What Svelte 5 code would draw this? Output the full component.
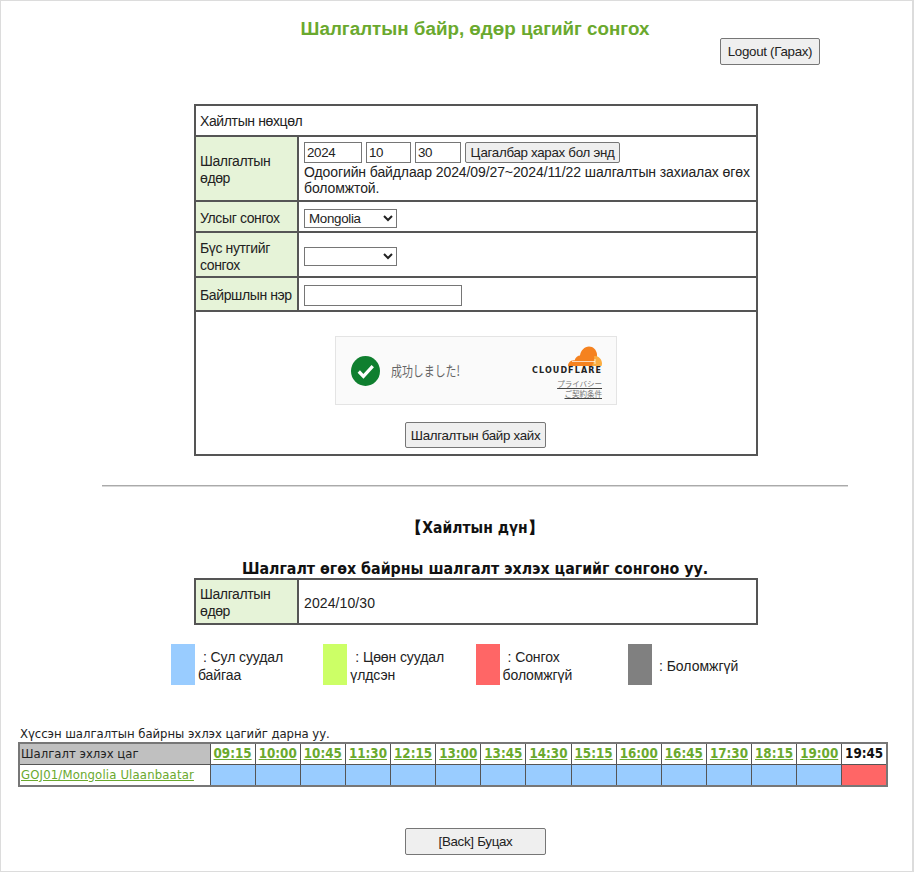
<script>
  const times = ['09:15','10:00','10:45','11:30','12:15','13:00','13:45','14:30','15:15','16:00','16:45','17:30','18:15','19:00'];
  const legend = [
    { color: '#99ccff', a: ': Сул суудал', b: 'байгаа' },
    { color: '#ccff66', a: ': Цөөн суудал', b: 'үлдсэн' },
    { color: '#ff6666', a: ': Сонгох', b: 'боломжгүй' },
    { color: '#808080', a: ': Боломжгүй', b: '' }
  ];
</script>

<div class="page">
  <div class="upper">
    <h1>Шалгалтын байр, өдөр цагийг сонгох</h1>
    <div class="logout-row"><button class="btn logout">Logout (Гарах)</button></div>

    <table class="form search">
      <colgroup><col class="c1" /><col /></colgroup>
      <tbody>
        <tr class="r1"><td colspan="2">Хайлтын нөхцөл</td></tr>
        <tr class="r2">
          <th>Шалгалтын өдөр</th>
          <td>
            <div class="date-line">
              <input class="i-y" value="2024" />
              <input class="i-m" value="10" />
              <input class="i-d" value="30" />
              <button class="btn cal">Цагалбар харах бол энд</button>
            </div>
            <div class="note">Одоогийн байдлаар 2024/09/27~2024/11/22 шалгалтын захиалах өгөх боломжтой.</div>
          </td>
        </tr>
        <tr class="r3">
          <th>Улсыг сонгох</th>
          <td><select class="sel"><option>Mongolia</option></select></td>
        </tr>
        <tr class="r4">
          <th>Бүс нутгийг сонгох</th>
          <td><select class="sel"><option></option></select></td>
        </tr>
        <tr class="r5">
          <th>Байршлын нэр</th>
          <td><input class="i-name" /></td>
        </tr>
        <tr class="r6">
          <td colspan="2" class="center">
            <div class="turnstile">
              <svg class="ok" viewBox="0 0 28 28" width="29" height="30" preserveAspectRatio="none">
                <circle cx="14" cy="14" r="14" fill="#0f7f2f" />
                <path d="M7.5 14.500l4.500 4.500 9-9.500" fill="none" stroke="#fff" stroke-width="3.200" />
              </svg>
              <span class="ok-text">成功しました!</span>
              <div class="cf">
                <svg class="cloud" viewBox="0 0 34 20" width="34" height="20">
                  <path d="M0 20c0-3 2-5.500 5-5.500.5-.2 1-.2 1.500 0C7.500 11 10 9.500 12 9.500c.6-5 4.500-9 9-9 4.300 0 7.500 3.500 8 7.500.5 4-1 8-3.500 12z" fill="#f58220" />
                  <path d="M24 20c1.500-3.500 2.500-6 2.200-10 4-.5 7.800 3 7.800 7.500 0 1-.2 1.800-.5 2.500z" fill="#fbad41" />
                  <path d="M4 15.500h23M27 13v5" stroke="#fff" stroke-width=".7" fill="none" />
                </svg>
                <span class="cf-name">CLOUDFLARE</span>
                <span class="cf-link">プライバシー</span>
                <span class="cf-link">ご契約条件</span>
              </div>
            </div>
            <button class="btn find">Шалгалтын байр хайх</button>
          </td>
        </tr>
      </tbody>
    </table>

    <hr />

    <h2>【Хайлтын дүн】</h2>
    <h3>Шалгалт өгөх байрны шалгалт эхлэх цагийг сонгоно уу.</h3>

    <table class="form selected">
      <colgroup><col class="c1" /><col /></colgroup>
      <tbody>
        <tr>
          <th>Шалгалтын өдөр</th>
          <td>2024/10/30</td>
        </tr>
      </tbody>
    </table>
  </div>

  <div class="legend">
    {#each legend as item}
      <div class="leg">
        <span class="swatch" style:background={item.color}></span>
        <span class="leg-text" class:one={!item.b}>
          <span class="leg-a">{item.a}</span>
          {#if item.b}<span>{item.b}</span>{/if}
        </span>
      </div>
    {/each}
  </div>

  <p class="hint">Хүссэн шалгалтын байрны эхлэх цагийг дарна уу.</p>

  <table class="slots">
    <colgroup><col class="slot-name" /></colgroup>
    <tbody>
      <tr class="head">
        <th class="name">Шалгалт эхлэх цаг</th>
        {#each times as t}
          <td class="t"><a href="#{t}">{t}</a></td>
        {/each}
        <td class="t last">19:45</td>
      </tr>
      <tr class="body">
        <td class="name"><a href="#loc">GOJ01/Mongolia Ulaanbaatar</a></td>
        {#each times as t}
          <td class="free"></td>
        {/each}
        <td class="full"></td>
      </tr>
    </tbody>
  </table>

  <div class="back"><button class="btn back-btn">[Back] Буцах</button></div>
</div>

<style>
  :global(body) { margin: 0; background: #fff; }
  .page {
    box-sizing: border-box;
    width: 914px;
    height: 872px;
    border: 1px solid #dcdcdc;
    border-width: 1px 2px 1px 1px;
    padding: 0 0 0 17px;
    font-family: "Liberation Sans", Arial, sans-serif;
    font-size: 14px;
    color: #222;
    overflow: hidden;
  }
  .upper {
    width: 746px;
    margin-left: 84px;
  }
  h1 {
    margin: 0;
    padding-top: 17px;
    height: 21px;
    line-height: 21px;
    font-size: 18.8px;
    font-weight: bold;
    color: #6aa92e;
    text-align: center;
  }
  .logout-row {
    display: flex;
    justify-content: flex-end;
    width: 718px;
    margin-top: -1px;
    height: 66px;
    align-items: flex-start;
  }
  .btn {
    box-sizing: border-box;
    font-family: "Liberation Sans", Arial, sans-serif;
    font-size: 13.33px;
    letter-spacing: -.3px;
    color: #222;
    background: #efefef;
    border: 1px solid #767676;
    border-radius: 2px;
    padding: 0;
  }
  .logout { width: 100px; height: 27px; }
  .form {
    border-collapse: separate;
    border-spacing: 0;
    border: 1px solid #555;
    width: 564px;
    margin-left: 92px;
    table-layout: fixed;
    letter-spacing: -.38px;
  }
  .c1 { width: 103px; }
  .form th, .form td {
    box-sizing: border-box;
    border: 1px solid #555;
    padding: 0 4px;
    font-weight: normal;
    text-align: left;
    line-height: 17px;
  }
  .form tr > td:nth-child(2) { padding-left: 5px; }
  .form th { background: #e6f3d8; }
  .search .r1 td { height: 31px; padding-top: 2px; }
  .search .r2 td, .search .r2 th { height: 65px; }
  .search .r2 th { padding-top: 2px; }
  .search .r3 td, .search .r3 th { height: 31px; padding-top: 4px; }
  .search .r4 td, .search .r4 th { height: 45px; padding-top: 4px; }
  .search .r5 td, .search .r5 th { height: 34px; padding-top: 2px; }
  .search .r6 td { height: 144px; }
  .date-line { display: flex; gap: 4px; align-items: center; height: 22px; }
  input {
    box-sizing: border-box;
    font-family: "Liberation Sans", Arial, sans-serif;
    font-size: 13.33px;
    letter-spacing: -.3px;
    color: #222;
    background: #fff;
    border: 1px solid #767676;
    padding: 1px 2px;
    height: 21px;
    border-radius: 0;
  }
  .i-y { width: 58px; }
  .i-m { width: 45px; }
  .i-d { width: 46px; }
  .cal { width: 155px; height: 21px; }
  .note { line-height: 16px; letter-spacing: -.1px; }
  .sel {
    box-sizing: border-box;
    width: 93px;
    height: 19px;
    font-family: "Liberation Sans", Arial, sans-serif;
    font-size: 13.33px;
    letter-spacing: -.3px;
    background: #fff;
    border: 1px solid #767676;
    border-radius: 0;
    color: #222;
  }
  .i-name { width: 158px; height: 21px; }
  .form td.center { text-align: center; vertical-align: top; padding: 24px 0 0; }
  .turnstile {
    box-sizing: border-box;
    width: 282px;
    height: 69px;
    margin: 0 auto 17px;
    background: #fafafa;
    border: 1px solid #e4e4e4;
    display: flex;
    align-items: center;
    padding-left: 15px;
    letter-spacing: 0;
  }
  .ok { flex: none; }
  .ok-text {
    display: inline-block;
    width: 68px;
    margin-left: 11px;
    white-space: nowrap;
    font-family: "Noto Sans CJK JP", sans-serif;
    font-size: 14px;
    color: #666;
    transform: scaleX(.78);
    transform-origin: left center;
  }
  .cf {
    margin-left: auto;
    margin-right: 14px;
    padding-top: 4px;
    display: flex;
    flex-direction: column;
    align-items: flex-end;
    line-height: 1;
  }
  .cloud { margin-bottom: 1px; }
  .cf-name {
    font-family: "DejaVu Sans", sans-serif;
    font-size: 8px;
    font-weight: bold;
    letter-spacing: 1.1px;
    color: #222;
    margin-bottom: 4px;
  }
  .cf-link {
    font-family: "Noto Sans CJK JP", sans-serif;
    font-size: 7.5px;
    line-height: 10px;
    color: #777;
    text-decoration: underline;
    text-decoration-color: #444;
  }
  .find { width: 141px; height: 26px; margin-right: 1px; }
  hr {
    margin: 29px 0 0;
    border: 0;
    border-top: 1px solid #aaa;
    border-bottom: 1px solid #d8d8d8;
    height: 0;
  }
  h2 {
    margin: 33px 0 0;
    font-family: "DejaVu Sans Condensed", "DejaVu Sans", sans-serif;
    font-size: 15.5px;
    line-height: 17px;
    font-weight: bold;
    color: #111;
    text-align: center;
  }
  h3 {
    margin: 23px 0 0;
    font-family: "DejaVu Sans Condensed", "DejaVu Sans", sans-serif;
    font-size: 15.8px;
    line-height: 18px;
    font-weight: bold;
    color: #111;
    text-align: center;
  }
  .selected { margin-top: 0; height: 47px; }
  .selected th, .selected td { padding-top: 3px; }
  .selected td { letter-spacing: 0.1px; }
  .legend {
    display: flex;
    margin: 19px 0 0 153px;
  }
  .leg {
    width: 152.3px;
    display: flex;
    align-items: center;
    flex: none;
  }
  .swatch { width: 24px; height: 41px; flex: none; }
  .leg-text { display: flex; flex-direction: column; line-height: 18px; margin-left: 3px; padding-top: 2px; letter-spacing: -.1px; }
  .leg-text.one { margin-left: 7px; letter-spacing: 0; }
  .leg-a { padding-left: 5px; }
  .leg-text.one .leg-a { padding-left: 0; }
  .hint {
    margin: 40px 0 0 2px;
    line-height: 17px;
    font-family: "DejaVu Sans Condensed", "DejaVu Sans", sans-serif;
    font-size: 13px;
    letter-spacing: -.05px;
  }
  .slots {
    border-collapse: collapse;
    table-layout: fixed;
    width: 870px;
    margin: 0;
    border: 2px solid #777;
    font-family: "DejaVu Sans Condensed", "DejaVu Sans", sans-serif;
    font-size: 13.3px;
  }
  .slot-name { width: 191px; }
  .slots td, .slots th {
    box-sizing: border-box;
    border: 1px solid #555;
    padding: 0;
    text-align: center;
  }
  .slots .name {
    text-align: left;
    padding: 0 1px;
    font-weight: normal;
    font-size: 13px;
  }
  .slots td.name a { letter-spacing: .15px; }
  .slots th.name { background: #c0c0c0; }
  .head td, .head th { height: 21px; }
  .body td { height: 22px; }
  .t { font-weight: bold; }
  .slots a { color: #6aa92e; }
  .last { color: #111; }
  .free { background: #99ccff; }
  .full { background: #ff6666; }
  .back { margin: 41px 0 0 387px; }
  .back-btn { width: 141px; height: 27px; }
</style>
